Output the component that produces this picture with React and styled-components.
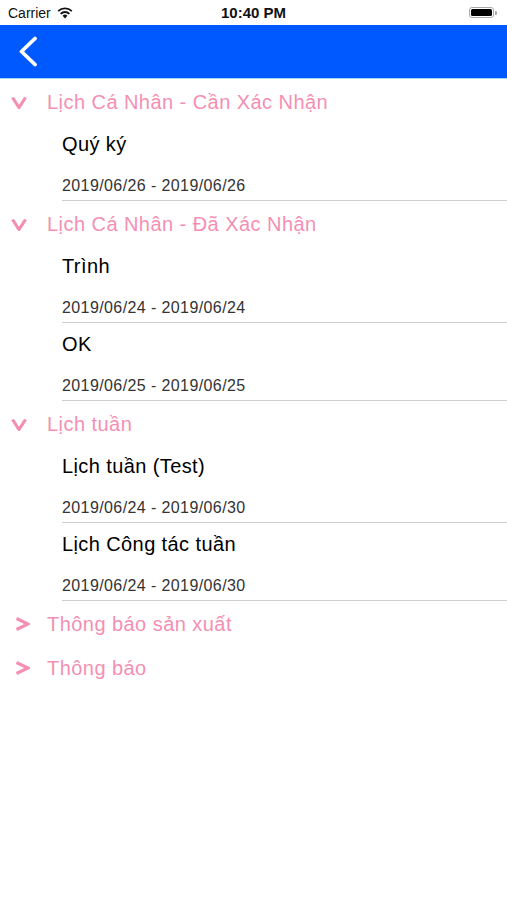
import React from "react";
import styled, { createGlobalStyle } from "styled-components";

const Global = createGlobalStyle`
  html, body { margin: 0; padding: 0; background: #fff; }
  body { font-family: "Liberation Sans", Arial, sans-serif; -webkit-font-smoothing: antialiased; }
`;

const Page = styled.div`
  width: 507px;
  min-height: 900px;
  background: #fff;
  display: flex;
  flex-direction: column;
`;

const StatusBar = styled.div`
  height: 25px;
  display: grid;
  grid-template-columns: 1fr auto 1fr;
  align-items: center;
  padding: 0 8px;
  font-size: 14px;
  color: #111;
`;

const Carrier = styled.div`
  display: flex;
  align-items: center;
  gap: 6px;
`;

const Time = styled.div`
  font-size: 15px;
  font-weight: 700;
`;

const Battery = styled.div`
  justify-self: end;
  display: flex;
  align-items: center;
  margin-right: 2px;
`;

const BatteryBody = styled.div`
  width: 25px;
  height: 11px;
  border: 1px solid #aaa;
  border-radius: 3px;
  padding: 1px;
  box-sizing: border-box;
  display: flex;
`;

const BatteryFill = styled.div`
  flex: 1;
  background: #000;
  border-radius: 1.5px;
`;

const BatteryTip = styled.div`
  width: 2px;
  height: 4px;
  background: #aaa;
  border-radius: 0 1px 1px 0;
  margin-left: 1px;
`;

const NavBar = styled.div`
  height: 53px;
  background: #0059ff;
  border-bottom: 1px solid #a8d4f5;
  display: flex;
  align-items: center;
  padding-left: 18px;
`;

const SectionHeader = styled.div`
  height: 44px;
  display: flex;
  align-items: center;
  padding-top: 2px;
  box-sizing: border-box;
`;

const ChevronBox = styled.div`
  width: 47px;
  display: flex;
  padding-left: ${(p) => (p.$open ? "11px" : "15px")};
  box-sizing: border-box;
`;

const HeaderTitle = styled.div`
  color: #f48fb3;
  font-size: 20px;
  letter-spacing: 0.45px;
`;

const Item = styled.div`
  margin-left: 62px;
  height: 78px;
  border-bottom: 1.5px solid #cfcfcf;
  box-sizing: border-box;
  display: flex;
  flex-direction: column;
`;

const ItemTitle = styled.div`
  font-size: 20px;
  letter-spacing: 0.4px;
  color: #000;
  margin-top: 9px;
  line-height: 24px;
`;

const ItemDate = styled.div`
  font-size: 16px;
  letter-spacing: 0.4px;
  color: #333;
  margin-top: 21px;
  line-height: 18px;
`;

const Wifi = () => (
  <svg width="16" height="12" viewBox="0 0 16 12">
    <path d="M8 11.5 L5.6 8.8 A3.4 3.4 0 0 1 10.4 8.8 Z" fill="#111" />
    <path d="M3.6 6.8 A6.3 6.3 0 0 1 12.4 6.8" stroke="#111" strokeWidth="1.8" fill="none" />
    <path d="M1.2 4.2 A9.8 9.8 0 0 1 14.8 4.2" stroke="#111" strokeWidth="1.8" fill="none" />
  </svg>
);

const Chevron = ({ open }) =>
  open ? (
    <svg width="16" height="13" viewBox="0 0 16 13">
      <polyline points="1.5,1.5 8,11.5 14.5,1.5" fill="none" stroke="#f48fb3" strokeWidth="3.2" strokeLinejoin="miter" />
    </svg>
  ) : (
    <svg width="15" height="14" viewBox="0 0 15 14">
      <polyline points="1.5,1.5 13,7 1.5,12.5" fill="none" stroke="#f48fb3" strokeWidth="3.2" strokeLinejoin="miter" />
    </svg>
  );

const BackArrow = () => (
  <svg width="20" height="31" viewBox="0 0 20 31">
    <polyline points="17,2.5 3.5,15.5 17,28.5" fill="none" stroke="#fff" strokeWidth="3.8" strokeLinecap="round" strokeLinejoin="round" />
  </svg>
);

const sections = [
  {
    title: "Lịch Cá Nhân - Cần Xác Nhận",
    open: true,
    items: [{ t: "Quý ký", d: "2019/06/26 - 2019/06/26" }],
  },
  {
    title: "Lịch Cá Nhân - Đã Xác Nhận",
    open: true,
    items: [
      { t: "Trình", d: "2019/06/24 - 2019/06/24" },
      { t: "OK", d: "2019/06/25 - 2019/06/25" },
    ],
  },
  {
    title: "Lịch tuần",
    open: true,
    items: [
      { t: "Lịch tuần (Test)", d: "2019/06/24 - 2019/06/30" },
      { t: "Lịch Công tác tuần", d: "2019/06/24 - 2019/06/30" },
    ],
  },
  { title: "Thông báo sản xuất", open: false, items: [] },
  { title: "Thông báo", open: false, items: [] },
];

export default function App() {
  return (
    <Page>
      <Global />
      <StatusBar>
        <Carrier>
          Carrier <Wifi />
        </Carrier>
        <Time>10:40 PM</Time>
        <Battery>
          <BatteryBody>
            <BatteryFill />
          </BatteryBody>
          <BatteryTip />
        </Battery>
      </StatusBar>
      <NavBar>
        <BackArrow />
      </NavBar>
      {sections.map((s) => (
        <div key={s.title}>
          <SectionHeader>
            <ChevronBox $open={s.open}>
              <Chevron open={s.open} />
            </ChevronBox>
            <HeaderTitle>{s.title}</HeaderTitle>
          </SectionHeader>
          {s.items.map((it) => (
            <Item key={it.t}>
              <ItemTitle>{it.t}</ItemTitle>
              <ItemDate>{it.d}</ItemDate>
            </Item>
          ))}
        </div>
      ))}
    </Page>
  );
}
